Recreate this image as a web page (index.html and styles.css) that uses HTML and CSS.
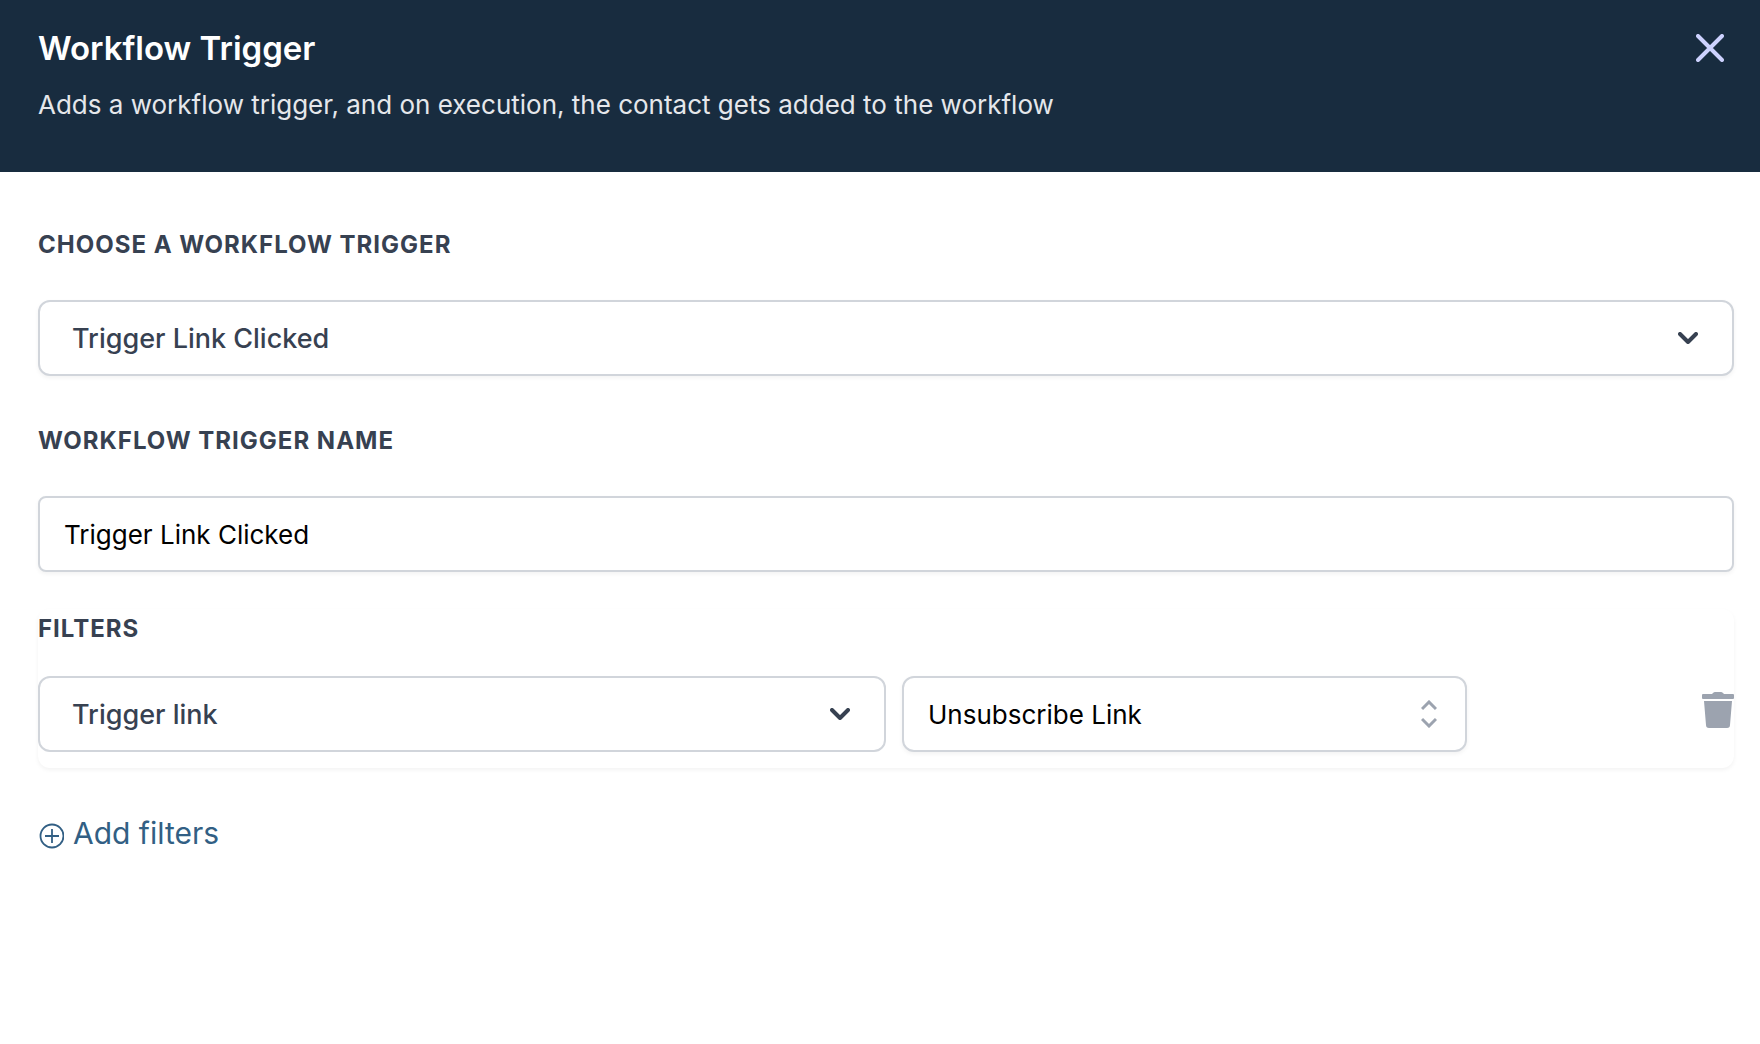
FILE: index.html
```html
<!DOCTYPE html>
<html lang="en">
<head>
    <meta charset="UTF-8">
    <meta name="viewport" content="width=device-width, initial-scale=1.0">
    <title>Workflow Trigger</title>
    <link rel="stylesheet" href="styles.css">
</head>
<body>
    <header class="header">
        <div>
            <h1 class="title">Workflow Trigger</h1>
            <p class="subtitle">Adds a workflow trigger, and on execution, the contact gets added to the workflow</p>
        </div>
        <button class="close" type="button" aria-label="Close">
            <svg width="28" height="28" viewBox="0 0 28 28" fill="none" stroke="currentColor" stroke-width="4" stroke-linecap="round">
                <path d="M2 2l24 24M26 2L2 26"/>
            </svg>
        </button>
    </header>

    <form class="content">
        <div class="group">
            <label class="label" for="trigger">Choose a workflow trigger</label>
            <div class="select">
                <select class="field field-select" id="trigger">
                    <option>Trigger Link Clicked</option>
                </select>
                <svg class="chevron" width="20" height="12" viewBox="0 0 20 12" fill="none" stroke="currentColor" stroke-width="4" stroke-linecap="round" stroke-linejoin="round">
                    <path d="M2 2l8 8 8-8"/>
                </svg>
            </div>
        </div>

        <div class="group">
            <label class="label" for="name">Workflow trigger name</label>
            <input class="field field-input" id="name" type="text" value="Trigger Link Clicked">
        </div>

        <div class="filters" role="group" aria-labelledby="filters-label">
            <h2 class="label" id="filters-label">Filters</h2>
            <div class="filter-row">
                <div class="select">
                    <select class="field field-select flat" aria-label="Filter type">
                        <option>Trigger link</option>
                    </select>
                    <svg class="chevron" width="20" height="12" viewBox="0 0 20 12" fill="none" stroke="currentColor" stroke-width="4" stroke-linecap="round" stroke-linejoin="round">
                        <path d="M2 2l8 8 8-8"/>
                    </svg>
                </div>
                <div class="select">
                    <select class="field field-value" aria-label="Filter value">
                        <option>Unsubscribe Link</option>
                    </select>
                    <svg class="selector" width="16" height="28" viewBox="0 0 16 28" fill="none" stroke="currentColor" stroke-width="3">
                        <path d="M1 9l7-7 7 7M1 19l7 7 7-7"/>
                    </svg>
                </div>
                <button class="delete" type="button" aria-label="Delete filter">
                    <svg width="32" height="36" viewBox="0 0 32 36" fill="currentColor">
                        <path d="M1 2h9l1-1q1-1 2-1h6q1 0 2 1l1 1h9q1 0 1 1v3q0 1-1 1H1q-1 0-1-1V3q0-1 1-1z"/>
                        <path d="M2 9h28l-2 24q0 3-3 3H7q-3 0-3-3z"/>
                    </svg>
                </button>
            </div>
        </div>

        <button class="add" type="button">
            <svg width="26" height="26" viewBox="0 0 26 26" fill="none" stroke="currentColor" stroke-width="1.8">
                <circle cx="14" cy="13" r="11.5"/>
                <path d="M14 6v14M7 13h14"/>
            </svg>
            Add filters
        </button>
    </form>
</body>
</html>
```
FILE: styles.css
```css
* {
    box-sizing: border-box;
}

body {
    margin: 0;
    background: #fff;
    color: #374151;
    font-family: Inter, "Liberation Sans", sans-serif;
    font-size: 26px;
}

button {
    border: 0;
    padding: 0;
    background: none;
    font: inherit;
    cursor: pointer;
}

svg {
    display: block;
}

.header {
    display: flex;
    justify-content: space-between;
    align-items: flex-start;
    padding: 28px 36px 49px 38px;
    background: #182c3f;
}

.title {
    margin: 0 0 19px;
    color: #fff;
    font-size: 33px;
    font-weight: 600;
    line-height: 40px;
}

.subtitle {
    margin: 0;
    color: #e5e7eb;
    line-height: 36px;
}

.close {
    padding-top: 6px;
    color: #cdd2fe;
}

.content {
    padding: 57px 26px 40px 38px;
}

.group {
    margin-bottom: 49px;
}

.group + .filters {
    margin-top: -12px;
}

.label {
    display: block;
    margin: 0 0 39px;
    font-size: 24px;
    font-weight: 700;
    line-height: 32px;
    letter-spacing: 1px;
    text-transform: uppercase;
}

.select {
    position: relative;
}

.field {
    display: block;
    width: 100%;
    height: 76px;
    border: 2px solid #d1d5db;
    border-radius: 12px;
    background: #fff;
    color: #000;
    font: inherit;
    box-shadow: 0 2px 4px rgba(0, 0, 0, 0.05);
    appearance: none;
}

.field-select {
    padding: 0 72px 0 32px;
    color: #374151;
    font-size: 27px;
    font-weight: 500;
}

.field-input {
    padding: 0 24px;
    border-radius: 8px;
}

.field-value {
    padding: 0 64px 0 24px;
}

.flat {
    box-shadow: none;
}

.chevron,
.selector {
    position: absolute;
    top: 32px;
    right: 36px;
    pointer-events: none;
}

.selector {
    top: 24px;
    right: 30px;
    color: #9ca3af;
}

.filters {
    padding: 4px 0 16px;
    border-radius: 12px;
    box-shadow: 0 2px 4px rgba(0, 0, 0, 0.05);
}

.filters .label {
    margin-bottom: 31px;
}

.filter-row {
    display: grid;
    grid-template-columns: 50% 33.333% 1fr;
    column-gap: 16px;
}

.delete {
    justify-self: end;
    align-self: start;
    padding-top: 16px;
    color: #9ca3af;
}

.add {
    display: flex;
    align-items: center;
    gap: 9px;
    margin-top: 45px;
    color: #325f84;
    font-size: 30px;
    line-height: 40px;
}

.add svg {
    margin-top: 6px;
}
```
